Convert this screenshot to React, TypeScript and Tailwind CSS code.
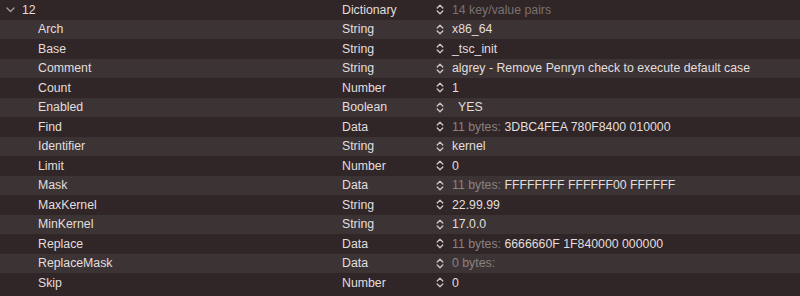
import React from "react";

type Row = {
  key: string;
  type: string;
  value: string;
  prefix?: string;
  dim?: boolean;
  indent?: boolean;
};

const rows: Row[] = [
  { key: "Arch", type: "String", value: "x86_64" },
  { key: "Base", type: "String", value: "_tsc_init" },
  { key: "Comment", type: "String", value: "algrey - Remove Penryn check to execute default case" },
  { key: "Count", type: "Number", value: "1" },
  { key: "Enabled", type: "Boolean", value: "YES", indent: true },
  { key: "Find", type: "Data", prefix: "11 bytes:", value: "3DBC4FEA 780F8400 010000" },
  { key: "Identifier", type: "String", value: "kernel" },
  { key: "Limit", type: "Number", value: "0" },
  { key: "Mask", type: "Data", prefix: "11 bytes:", value: "FFFFFFFF FFFFFF00 FFFFFF" },
  { key: "MaxKernel", type: "String", value: "22.99.99" },
  { key: "MinKernel", type: "String", value: "17.0.0" },
  { key: "Replace", type: "Data", prefix: "11 bytes:", value: "6666660F 1F840000 000000" },
  { key: "ReplaceMask", type: "Data", prefix: "0 bytes:", value: "" },
  { key: "Skip", type: "Number", value: "0" },
];

// up/down stepper glyph used in the value column
function Stepper() {
  return (
    <svg width="8" height="11" viewBox="0 0 8 11" className="shrink-0">
      <path d="M1.2 4 L4 1.3 L6.8 4" fill="none" stroke="#cfc8c8" strokeWidth="1.3" strokeLinecap="round" strokeLinejoin="round" />
      <path d="M1.2 7 L4 9.7 L6.8 7" fill="none" stroke="#cfc8c8" strokeWidth="1.3" strokeLinecap="round" strokeLinejoin="round" />
    </svg>
  );
}

function Chevron() {
  return (
    <svg width="9" height="6" viewBox="0 0 9 6">
      <path d="M1 1 L4.5 4.5 L8 1" fill="none" stroke="#a8a0a0" strokeWidth="1.2" strokeLinecap="round" strokeLinejoin="round" />
    </svg>
  );
}

export default function App() {
  return (
    <div
      className="w-[800px] h-[296px] bg-[#302627] text-[12.3px] text-[#e2dede] overflow-hidden"
      style={{ fontFamily: '"Liberation Sans", Arial, sans-serif' }}
    >
      {/* Parent dictionary row */}
      <div className="flex items-center h-[19.5px] bg-[#302627]">
        <div className="w-[342px] flex items-center pl-[6px]">
          <Chevron />
          <span className="ml-[7px]">12</span>
        </div>
        <div className="w-[94px]">Dictionary</div>
        <div className="flex items-center gap-[8px]">
          <Stepper />
          <span className="text-[#7a7171]">14 key/value pairs</span>
        </div>
      </div>

      {rows.map((r, i) => (
        <div
          key={r.key}
          className={`flex items-center h-[19.5px] ${i % 2 === 0 ? "bg-[#3c3434]" : "bg-[#302627]"}`}
        >
          <div className="w-[342px] pl-[38px]">{r.key}</div>
          <div className="w-[94px]">{r.type}</div>
          <div className="flex items-center gap-[8px]">
            <Stepper />
            <span className={r.indent ? "pl-[6px]" : ""}>
              {r.prefix && <span className="text-[#8a8282]">{r.prefix} </span>}
              {r.value}
            </span>
          </div>
        </div>
      ))}
    </div>
  );
}
